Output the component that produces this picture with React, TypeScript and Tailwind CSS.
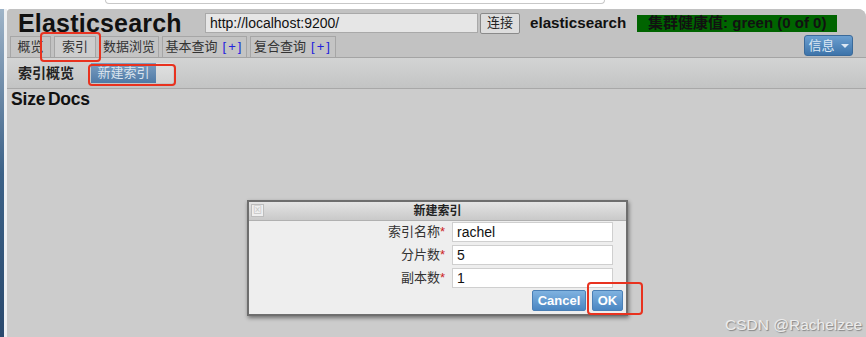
const cjk = "font-['Liberation_Sans','Noto_Sans_CJK_SC',sans-serif]";

function Tab({ label, plus, active }: { label: string; plus?: boolean; active?: boolean }) {
  return (
    <div
      className={`h-[21px] flex items-center justify-center border border-b-0 border-[#a6a6a6] text-[13px] text-[#333] ${
        active ? 'bg-[#cdcdcd]' : 'bg-[#c4c4c4]'
      }`}
    >
      <span>{label}</span>
      {plus && <span className="ml-[5px] text-[#2222dd] tracking-[2px]">[+]</span>}
    </div>
  );
}

function Field({ label, value }: { label: string; value: string }) {
  return (
    <div className="flex items-center h-[20px] mb-[3px]">
      <div className="w-[196px] text-right text-[13px] text-[#333]">
        {label}
        <span className="text-[#cc2222]">*</span>
      </div>
      <div className="ml-[7px] w-[161px] h-[20px] bg-white border border-[#cfcfcf] px-[4px] flex items-center text-[14px] text-[#111]">
        {value}
      </div>
    </div>
  );
}

export default function App() {
  return (
    <div className={`relative w-[866px] h-[337px] overflow-hidden bg-white ${cjk}`}>
      {/* top browser strip */}
      <div className="h-[9px] flex">
        <div className="w-[105px]" />
        <div className="w-[500px] h-[4px] border-b border-x border-[#c8c8c8] rounded-b-[8px] bg-white" />
      </div>

      <div className="flex h-[328px]">
        <div className="w-[4px] bg-gradient-to-b from-[#9fb4c8] via-[#3c6288] to-[#2a4a6e]" />
        <div className="w-[3px] bg-[#eef0f2]" />

        <div className="flex-1 flex flex-col bg-[#cccccc] rounded-tr-[8px] rounded-tl-[4px] overflow-hidden">
          {/* header */}
          <div className="bg-[#c2c2c2]">
            <div className="h-[28px] flex items-center pl-[11px]">
              <div className="text-[25px] font-bold text-[#111] leading-none tracking-[0.2px] w-[187px]">Elasticsearch</div>
              <div className="w-[273px] h-[20px] bg-[#e6e6e6] border border-[#a9a9a9] flex items-center pl-[4px] text-[14px] text-[#111]">
                http://localhost:9200/
              </div>
              <div className="ml-[2px] w-[40px] h-[21px] bg-[#dddddd] border border-[#8a8a8a] rounded-[2px] flex items-center justify-center text-[13px] text-[#222]">
                连接
              </div>
              <div className="ml-[10px] text-[15.2px] font-bold text-[#111]">elasticsearch</div>
              <div className="ml-[11px] w-[200px] h-[17px] bg-[#006400] flex items-center justify-center text-[15px] font-bold text-[#111]">
                集群健康值: green (0 of 0)
              </div>
            </div>

            <div className="h-[21px] flex items-end pl-[3px] pr-[13px] border-b border-[#a4a4a4]">
              <div className="flex items-end gap-[3px]">
                <div className="w-[41px]"><Tab label="概览" /></div>
                <div className="w-[42px]"><Tab label="索引" active /></div>
                <div className="w-[60px]"><Tab label="数据浏览" /></div>
                <div className="w-[85px]"><Tab label="基本查询" plus /></div>
                <div className="w-[86px]"><Tab label="复合查询" plus /></div>
              </div>
              <div className="ml-auto mb-[1px] w-[49px] h-[21px] rounded-[3px] bg-gradient-to-b from-[#6b9fd0] to-[#3d74aa] border border-[#3a6a9a] flex items-center justify-center text-[13px] text-[#dce8f4]">
                信息
                <span className="ml-[6px] w-0 h-0 border-x-[4px] border-x-transparent border-t-[4px] border-t-[#dce8f4]" />
              </div>
            </div>
          </div>

          {/* sub bar */}
          <div className="h-[31px] flex items-center pl-[11px] bg-gradient-to-b from-[#d3d4d4] to-[#c3c4c4] border-b border-[#a8a8a8]">
            <div className="text-[14px] font-bold text-[#222]">索引概览</div>
            <div className="ml-[17px] flex h-[20px]">
              <div className="w-[65px] bg-gradient-to-b from-[#7a9dc0] to-[#4f7aa6] flex items-center justify-center text-[13px] text-[#d9e3ee]">
                新建索引
              </div>
              <div className="w-[17px] bg-gradient-to-b from-[#e0e1e1] to-[#d2d3d3]" />
            </div>
          </div>

          {/* content */}
          <div className="flex-1 pl-[4px]">
            <div className="text-[17.5px] leading-[20px] font-bold text-[#111] tracking-[-0.2px]">
              Size <span className="ml-[-2px]">Docs</span>
            </div>
          </div>
        </div>
      </div>

      {/* dialog */}
      <div className="absolute left-[247px] top-[200px] w-[381px] h-[116px] bg-[#eeeeee] border-2 border-[#6e6e6e] shadow-[1px_2px_4px_rgba(0,0,0,0.45)] flex flex-col">
        <div className="h-[19px] relative flex items-center justify-center bg-gradient-to-b from-[#e4e4e4] to-[#c9c9c9] border-b border-[#b0b0b0]">
          <div className="absolute left-[2px] top-[2px] w-[13px] h-[13px] border border-[#bdbdbd] bg-[#efefef] flex items-center justify-center text-[9px] text-[#c4c4c4] leading-none">
            ⊠
          </div>
          <span className="text-[12px] font-bold text-[#222]">新建索引</span>
        </div>
        <div className="pt-[1px]">
          <Field label="索引名称" value="rachel" />
          <Field label="分片数" value="5" />
          <Field label="副本数" value="1" />
        </div>
        <div className="flex justify-end gap-[6px] pr-[3px] mt-[-1px]">
          <div className="w-[54px] h-[21px] rounded-[2px] bg-gradient-to-b from-[#7fb2e0] to-[#4a86c2] border border-[#4a7fb5] flex items-center justify-center text-[13px] font-bold text-white">
            Cancel
          </div>
          <div className="w-[31px] h-[21px] rounded-[2px] bg-gradient-to-b from-[#7fb2e0] to-[#4a86c2] border border-[#4a7fb5] flex items-center justify-center text-[13px] font-bold text-white">
            OK
          </div>
        </div>
      </div>

      {/* red annotations */}
      <div className="absolute left-[40px] top-[32px] w-[61px] h-[30px] border-2 border-[#e8321f] rounded-[4px]" />
      <div className="absolute left-[88px] top-[64px] w-[88px] h-[22px] border-2 border-[#e8321f] rounded-[4px]" />
      <div className="absolute left-[587px] top-[282px] w-[56px] h-[33px] border-2 border-[#e8321f] rounded-[4px]" />

      {/* watermark */}
      <div className="absolute left-[725px] top-[313px] text-[15.5px] text-[#ececec] [text-shadow:1px_1px_1px_rgba(0,0,0,0.35)]">
        CSDN @Rachelzee
      </div>
    </div>
  );
}
